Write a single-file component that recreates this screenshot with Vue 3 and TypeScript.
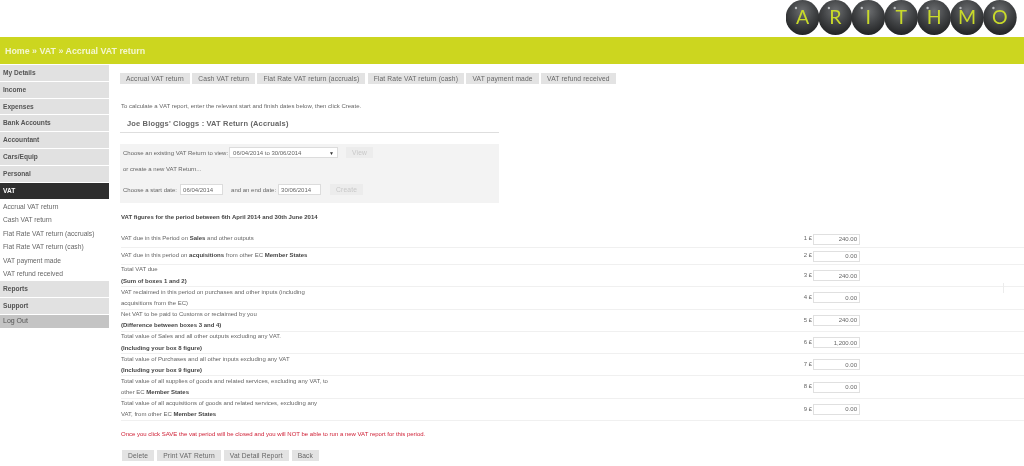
<script setup lang="ts">
interface Row { box: number; value: string; lines: string[] }
const topMenu: string[] = ['My Details', 'Income', 'Expenses', 'Bank Accounts', 'Accountant', 'Cars/Equip', 'Personal']
const subMenu: string[] = ['Accrual VAT return', 'Cash VAT return', 'Flat Rate VAT return (accruals)', 'Flat Rate VAT return (cash)', 'VAT payment made', 'VAT refund received']
const letters: string[] = ['A', 'R', 'I', 'T', 'H', 'M', 'O']
const rows: Row[] = [
  { box: 1, value: '240.00', lines: ['VAT due in this Period on <b>Sales</b> and other outputs'] },
  { box: 2, value: '0.00', lines: ['VAT due in this period on <b>acquisitions</b> from other EC <b>Member States</b>'] },
  { box: 3, value: '240.00', lines: ['Total VAT due', '<b>(Sum of boxes 1 and 2)</b>'] },
  { box: 4, value: '0.00', lines: ['VAT reclaimed in this period on purchases and other inputs (including', 'acquisitions from the EC)'] },
  { box: 5, value: '240.00', lines: ['Net VAT to be paid to Customs or reclaimed by you', '<b>(Difference between boxes 3 and 4)</b>'] },
  { box: 6, value: '1,200.00', lines: ['Total value of Sales and all other outputs excluding any VAT.', '<b>(Including your box 8 figure)</b>'] },
  { box: 7, value: '0.00', lines: ['Total value of Purchases and all other inputs excluding any VAT', '<b>(Including your box 9 figure)</b>'] },
  { box: 8, value: '0.00', lines: ['Total value of all supplies of goods and related services, excluding any VAT, to', 'other EC <b>Member States</b>'] },
  { box: 9, value: '0.00', lines: ['Total value of all acquisitions of goods and related services, excluding any', 'VAT, from other EC <b>Member States</b>'] },
]
</script>

<template>
  <div class="page">
    <header class="top">
      <svg class="logo" width="232" height="37" viewBox="0 0 232 37" role="img" aria-label="ARITHMO">
        <defs>
          <radialGradient id="ball" cx="50%" cy="32%" r="72%">
            <stop offset="0" stop-color="#6c6e70" />
            <stop offset="0.5" stop-color="#424446" />
            <stop offset="1" stop-color="#1e1f20" />
          </radialGradient>
        </defs>
        <g v-for="(l, i) in letters" :key="l">
          <ellipse :cx="16.5 + i * 32.9" cy="17.5" rx="16.8" ry="17.5" fill="url(#ball)" />
          <circle :cx="10 + i * 32.9" cy="8" r="1.2" fill="#b9bbbd" />
          <text :x="16.5 + i * 32.9" y="24" text-anchor="middle" class="logo-letter">{{ l }}</text>
        </g>
      </svg>
    </header>
    <div class="bar">Home » VAT » Accrual VAT return</div>
    <div class="body">
      <nav class="side">
        <a v-for="m in topMenu" :key="m" class="item">{{ m }}</a>
        <a class="item active">VAT</a>
        <div class="subs">
          <a v-for="s in subMenu" :key="s" class="sub">{{ s }}</a>
        </div>
        <a class="item">Reports</a>
        <a class="item">Support</a>
        <a class="item logout">Log Out</a>
      </nav>
      <main class="main">
        <div class="tabs">
          <span v-for="s in subMenu" :key="s" class="btn">{{ s }}</span>
        </div>
        <p class="intro">To calculate a VAT report, enter the relevant start and finish dates below, then click Create.</p>
        <div class="narrow">
          <h1 class="title">Joe Bloggs' Cloggs : VAT Return (Accruals)</h1>
          <section class="form">
            <div class="frow">
              <span>Choose an existing VAT Return to view:</span>
              <div class="select"><span>06/04/2014 to 30/06/2014</span><span class="arrow">▼</span></div>
              <span class="btn faint view">View</span>
            </div>
            <div class="frow create-text">or create a new VAT Return...</div>
            <div class="frow dates">
              <span>Choose a start date:</span>
              <input class="date" value="06/04/2014" />
              <span class="end-label">and an end date:</span>
              <input class="date" value="30/06/2014" />
              <span class="btn faint create">Create</span>
            </div>
          </section>
        </div>
        <p class="period">VAT figures for the period between 6th April 2014 and 30th June 2014</p>
        <div class="table">
          <div v-for="r in rows" :key="r.box" class="row" :class="{ single: r.lines.length === 1 }">
            <div class="desc">
              <div v-for="(line, i) in r.lines" :key="i" v-html="line"></div>
            </div>
            <div class="box">{{ r.box }} £</div>
            <input class="amount" :value="r.value" />
          </div>
        </div>
        <p class="warn">Once you click SAVE the vat period will be closed and you will NOT be able to run a new VAT report for this period.</p>
        <div class="actions">
          <span class="btn">Delete</span>
          <span class="btn">Print VAT Return</span>
          <span class="btn">Vat Detail Report</span>
          <span class="btn">Back</span>
        </div>
      </main>
    </div>
    <i class="mark"></i>
  </div>
</template>

<style>
html, body { margin: 0; background: #fff; overflow: hidden; }
</style>

<style scoped>
.page {
  position: relative;
  width: 1024px;
  height: 466px;
  overflow: hidden;
  font-family: "Liberation Sans", Arial, sans-serif;
  font-size: 6px;
  color: #666;
  filter: blur(0.35px);
}
.top { height: 37px; display: flex; justify-content: flex-end; padding-right: 6px; }
.logo { display: block; }
.logo-letter { font-family: Lato, "Liberation Sans", sans-serif; font-size: 19.5px; font-weight: 400; fill: #c9da2a; }
.bar {
  height: 27px;
  line-height: 28px;
  background: #ccd61f;
  color: #f4f6d0;
  font-size: 8.9px;
  font-weight: 700;
  padding-left: 5px;
}
.body { display: flex; }
.side { width: 109px; flex: none; padding-top: 1px; display: flex; flex-direction: column; }
.item {
  height: 15.8px;
  line-height: 15px;
  margin-bottom: 1px;
  background: #e1e1e1;
  padding-left: 3px;
  font-weight: 700;
  color: #555;
  font-size: 6.6px;
}
.item.active { background: #2e2e2e; color: #fff; height: 16px; margin-bottom: 0; }
.subs { padding-top: 1px; margin-bottom: 0.8px; }
.sub { display: block; height: 13.5px; line-height: 14px; padding-left: 3px; color: #666; font-size: 6.7px; }
.item.logout { background: #c4c4c4; height: 13px; line-height: 12px; font-size: 7px; font-weight: 400; }
.main { flex: 1; min-width: 0; padding: 9px 0 0 11px; }
.tabs { display: flex; gap: 2.4px; }
.btn {
  display: block;
  height: 11px;
  line-height: 11px;
  padding: 0 6px;
  background: #e3e3e3;
  color: #666;
  font-size: 6.7px;
  letter-spacing: 0.14px;
  white-space: nowrap;
}
.intro { margin: 18px 0 0 1px; line-height: 9px; }
.narrow { width: 379px; }
.title {
  margin: 6px 0 0;
  padding: 0 0 2px 7px;
  height: 13px;
  line-height: 13px;
  font-size: 7.5px;
  font-weight: 700;
  color: #666;
  letter-spacing: 0.15px;
  border-bottom: 1px solid #dedede;
}
.form { margin-top: 11px; height: 59px; background: #f3f3f3; padding: 3px 3px 0; box-sizing: border-box; }
.frow { display: flex; align-items: center; height: 11px; }
.select {
  width: 109px;
  height: 11px;
  margin-left: 1px;
  box-sizing: border-box;
  border: 1px solid #dcdcdc;
  background: #fff;
  display: flex;
  align-items: center;
  justify-content: space-between;
  padding: 0 3px;
}
.arrow { font-size: 5px; color: #333; }
.btn.faint { background: #ececec; color: #c8c8c8; }
.view { margin-left: 8px; }
.create-text { margin-top: 5.5px; }
.dates { margin-top: 9.5px; }
.date {
  width: 43px;
  height: 11px;
  box-sizing: border-box;
  margin: 0 0 0 3px;
  padding: 0 2px;
  border: 1px solid #dcdcdc;
  background: #fff;
  font: 6px "Liberation Sans", Arial, sans-serif;
  color: #666;
}
.end-label { margin: 0 -1px 0 8px; }
.create { margin-left: 9px; }
.period { margin: 10px 0 0 1px; line-height: 9px; font-weight: 700; color: #444; }
.table { margin: 9px 0 0 1px; }
.row {
  display: flex;
  align-items: center;
  height: 22.3px;
  box-sizing: border-box;
  border-bottom: 1px solid #f0f0f0;
  line-height: 11.3px;
}
.row.single { height: 17px; }
.desc { width: 670px; }
.desc :deep(b) { color: #444; }
.box { width: 21px; text-align: right; }
.amount {
  width: 47px;
  height: 11px;
  margin-left: 1px;
  box-sizing: border-box;
  border: 1px solid #e0e0e0;
  padding: 0 2px;
  background: #fff;
  text-align: right;
  font: 6px "Liberation Sans", Arial, sans-serif;
  color: #666;
}
.warn { margin: 9px 0 0 1px; line-height: 9px; color: #cf2036; }
.actions { display: flex; gap: 3px; margin: 11px 0 0 2px; }
.mark { position: absolute; left: 1003px; top: 283px; width: 1px; height: 10px; background: #ececec; }
</style>
